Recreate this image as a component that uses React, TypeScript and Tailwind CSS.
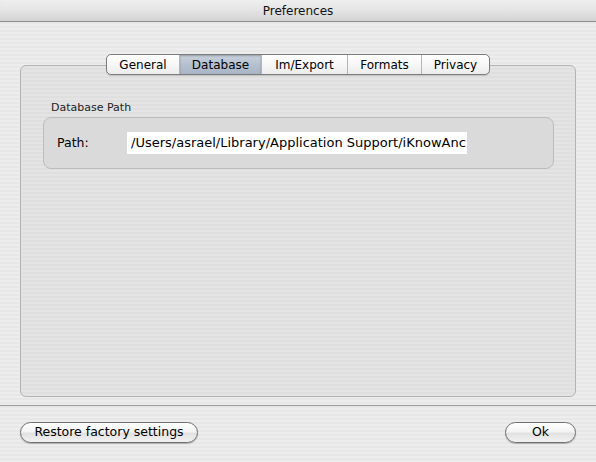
const stripes =
  "bg-[repeating-linear-gradient(180deg,#ededed_0px,#ededed_2px,#e7e7e7_2px,#e7e7e7_4px)]";

const TABS = ["General", "Database", "Im/Export", "Formats", "Privacy"];
const TAB_WIDTHS = ["w-[72px]", "w-[82px]", "w-[86px]", "w-[74px]", "w-[68px]"];

function AquaButton({ label, width }: { label: string; width: string }) {
  return (
    <button
      className={`${width} h-[21px] rounded-full border border-[#6f6f6f] bg-[linear-gradient(180deg,#ffffff_0%,#f4f4f4_45%,#e2e2e2_55%,#f2f2f2_100%)] shadow-[0_1px_1px_rgba(0,0,0,0.25)] text-[12.5px] text-black leading-none flex items-center justify-center`}
    >
      {label}
    </button>
  );
}

export default function App() {
  return (
    <div
      className={`w-[596px] h-[462px] flex flex-col overflow-hidden ${stripes}`}
      style={{ fontFamily: '"DejaVu Sans", "Liberation Sans", sans-serif' }}
    >
      {/* Title bar */}
      <div className="h-[22px] shrink-0 rounded-t-[6px] bg-[linear-gradient(180deg,#efefef_0%,#e4e4e4_50%,#d3d3d3_100%)] border-b border-[#8c8c8c] flex items-center justify-center">
        <span className="text-[12px] text-[#111]">Preferences</span>
      </div>

      {/* Body */}
      <div className="flex-1 flex flex-col px-[20px] pt-[32px]">
        {/* Tabs */}
        <div className="relative z-10 flex justify-center -mb-[10px]">
          <div className="flex h-[21px] rounded-[5px] border border-[#7c7c7c] bg-[linear-gradient(180deg,#ffffff_0%,#f7f7f7_50%,#ececec_100%)] overflow-hidden shadow-[0_1px_1px_rgba(0,0,0,0.15)]">
            {TABS.map((t, i) => (
              <div
                key={t}
                className={`${TAB_WIDTHS[i]} h-full flex items-center justify-center text-[12px] text-black ${
                  i > 0 ? "border-l border-[#b5b5b5]" : ""
                } ${
                  t === "Database"
                    ? "bg-[linear-gradient(180deg,#c9d2dd_0%,#b6c1cf_50%,#a9b5c5_100%)] shadow-[inset_0_1px_2px_rgba(0,0,0,0.25)]"
                    : ""
                }`}
              >
                {t}
              </div>
            ))}
          </div>
        </div>

        {/* Tab box */}
        <div className="h-[332px] rounded-[6px] border border-[#b3b3b3] bg-[repeating-linear-gradient(180deg,#e4e4e4_0px,#e4e4e4_2px,#dfdfdf_2px,#dfdfdf_4px)] px-[22px] pt-[36px]">
          <div className="pl-[8px] text-[11px] text-[#222] leading-none mb-[4px]">Database Path</div>
          <div className="w-[511px] h-[52px] rounded-[8px] border border-[#bcbcbc] bg-[#dadada] flex items-center pl-[13px]">
            <span className="w-[70px] text-[12.5px] text-black">Path:</span>
            <div className="w-[340px] h-[22px] bg-white flex items-center pl-[4px] overflow-hidden whitespace-nowrap text-[13px] text-black">
              /Users/asrael/Library/Application Support/iKnowAnc
            </div>
          </div>
        </div>
      </div>

      {/* Bottom separator and buttons */}
      <div className="shrink-0 mt-[8px] border-t border-[#9b9b9b] h-[57px] flex items-start justify-between px-[20px] pt-[16px]">
        <AquaButton label="Restore factory settings" width="w-[178px]" />
        <AquaButton label="Ok" width="w-[71px]" />
      </div>
    </div>
  );
}
